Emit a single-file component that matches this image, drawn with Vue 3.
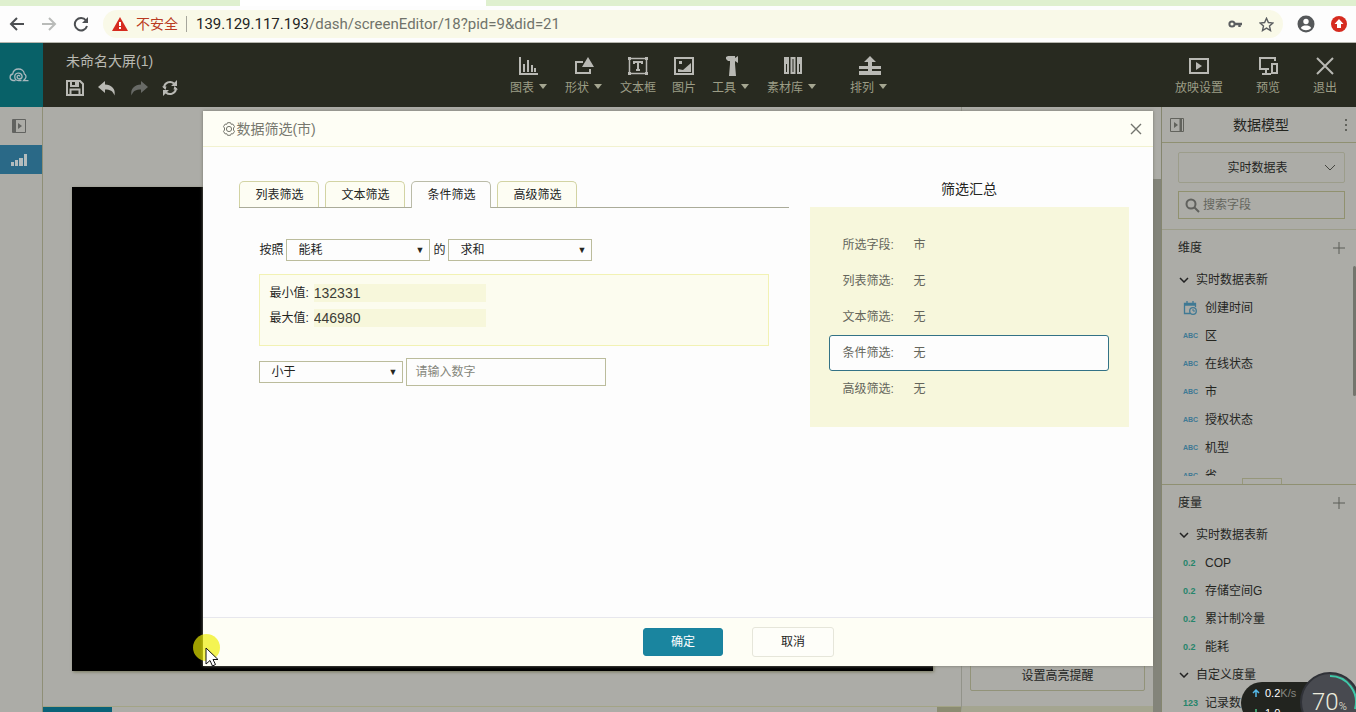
<script setup>
import { ref } from 'vue'

const tools = [
  { name: '图表', icon: 'chart', menu: true },
  { name: '形状', icon: 'shape', menu: true },
  { name: '文本框', icon: 'text', menu: false },
  { name: '图片', icon: 'image', menu: false },
  { name: '工具', icon: 'hammer', menu: true },
  { name: '素材库', icon: 'library', menu: true },
  { name: '排列', icon: 'align', menu: true },
]
const tabs = ['列表筛选', '文本筛选', '条件筛选', '高级筛选']
const activeTab = ref('条件筛选')
const field = ref('能耗')
const method = ref('求和')
const operator = ref('小于')
const amount = ref('')
const keyword = ref('')
const summary = [
  ['所选字段', '市'],
  ['列表筛选', '无'],
  ['文本筛选', '无'],
  ['条件筛选', '无'],
  ['高级筛选', '无'],
]
const dimensions = ['区', '在线状态', '市', '授权状态', '机型', '省']
const measures = ['COP', '存储空间G', '累计制冷量', '能耗']
</script>

<template>
  <div class="window">
    <div class="tabstrip"><span class="current-tab"></span></div>
    <div class="browser">
      <button class="nav" aria-label="后退"><svg width="16" height="16" viewBox="0 0 16 16"><path d="M15 8H2M8 2L2 8l6 6" fill="none" stroke="#4c4f52" stroke-width="2" /></svg></button>
      <button class="nav" aria-label="前进"><svg width="16" height="16" viewBox="0 0 16 16"><path d="M1 8h13M8 2l6 6-6 6" fill="none" stroke="#b9bbb9" stroke-width="2" /></svg></button>
      <button class="nav" aria-label="刷新"><svg width="16" height="16" viewBox="0 0 16 16"><path d="M13 4.5A6.2 6.2 0 1 0 14 10" fill="none" stroke="#4c4f52" stroke-width="2" /><path d="M15 1v6H9z" fill="#4c4f52" /></svg></button>
      <div class="address">
        <svg width="16" height="14" viewBox="0 0 16 14"><path d="M8 0l8 14H0z" fill="#d62b1f" /><path d="M7 5h2v4H7zM7 10h2v2H7z" fill="#fff" /></svg>
        <span class="unsafe">不安全</span>
        <span class="url"><b>139.129.117.193</b>/dash/screenEditor/18?pid=9&amp;did=21</span>
        <svg class="key" width="14" height="8" viewBox="0 0 14 8"><circle cx="4" cy="4" r="2.6" fill="none" stroke="#5b5e60" stroke-width="2" /><path d="M6 4h8M11.500 4v3" stroke="#5b5e60" stroke-width="2.400" /></svg>
        <svg width="15" height="15" viewBox="0 0 15 15"><path d="M7.500 1.300l1.900 4.200 4.500.5-3.400 3 1 4.500-4-2.400-4 2.400 1-4.500-3.400-3 4.500-.5z" fill="none" stroke="#5b5e60" stroke-width="1.400" /></svg>
      </div>
      <button class="nav" aria-label="用户"><svg width="18" height="18" viewBox="0 0 18 18"><circle cx="9" cy="9" r="8.500" fill="#55585a" /><circle cx="9" cy="6.500" r="2.700" fill="#fff" /><path d="M3.800 13c1-2 3-2.500 5.200-2.500s4.200.5 5.200 2.500c-3 3-7.400 3-10.400 0z" fill="#fff" /></svg></button>
      <button class="nav" aria-label="更新"><svg width="16" height="16" viewBox="0 0 16 16"><circle cx="8" cy="8" r="8" fill="#d62b1f" /><path d="M8 3l4.500 5H10v4H6V8H3.500z" fill="#fff" /></svg></button>
    </div>

    <div class="app">
      <header class="topbar">
        <a class="logo" href="#" aria-label="首页"><svg width="20" height="14" viewBox="0 0 20 14"><path d="M6.500 12.500H4a3.300 3.300 0 0 1-.3-6.500C4.200 3 6.500 1 9.500 1S15 3 15.300 5.800c2 1 2.200 3.500.7 5.200l-1.500 1.700H19.500" fill="none" stroke="#a9b8bd" stroke-width="1.300" /><path d="M12.500 12.500H9.500a3.700 3.700 0 1 1 3.600-4.300c.2 3-4.800 3.600-5 .7 0-1.700 2.500-2 2.700-.4" fill="none" stroke="#a9b8bd" stroke-width="1.300" /></svg></a>
        <div class="document">
          <span class="title">未命名大屏(1)</span>
          <div class="actions">
            <button aria-label="保存"><svg width="18" height="16" viewBox="0 0 18 16"><path d="M1 1h13l3 3v11H1z" fill="none" stroke="#b9b9b4" stroke-width="2" /><path d="M5 1v5h7V1M4.500 15V9.500h9V15" fill="none" stroke="#b9b9b4" stroke-width="2" /><path d="M9 2h2v3H9z" fill="#b9b9b4" /></svg></button>
            <button aria-label="撤销"><svg width="18" height="16" viewBox="0 0 18 16"><path d="M7 1v3.500c6 0 11 4 9.500 11C15 11 12 9.500 7 9.500V13L0 7z" fill="#b9b9b4" /></svg></button>
            <button aria-label="重做"><svg width="18" height="16" viewBox="0 0 18 16"><path d="M11 1v3.500c-6 0-11 4-9.500 11C3 11 6 9.500 11 9.500V13l7-6z" fill="#686a66" /></svg></button>
            <button aria-label="刷新"><svg width="16" height="16" viewBox="0 0 16 16"><path d="M2 7.500A6 6 0 0 1 12 3.500M14 8.500A6 6 0 0 1 4 12.500" fill="none" stroke="#b9b9b4" stroke-width="2" /><path d="M9 6h6V0zM7 10H1v6zM0 6.500h4.500L3.500 10zM16 9.500h-4.500L12.500 6z" fill="#b9b9b4" /></svg></button>
          </div>
        </div>
        <nav class="tools">
          <button v-for="t in tools" :key="t.name" class="tool" :class="t.icon">
            <svg width="22" height="20" viewBox="0 0 22 20">
              <path v-if="t.icon === 'chart'" d="M2 1v17h18M6 16V8M10 16V4M14 16V9M17 16v-4" fill="none" stroke="#b9b9b4" stroke-width="2" />
              <g v-else-if="t.icon === 'shape'"><path d="M10 6H3v11h14v-4" fill="none" stroke="#b9b9b4" stroke-width="2" /><path d="M15 1l6 10H9z" fill="#b9b9b4" /></g>
              <g v-else-if="t.icon === 'text'"><path d="M2.500 2.500h17v15h-17z" fill="none" stroke="#b9b9b4" stroke-width="1.500" /><path d="M7 8V6h8v2M11 6v8M9 14h4" fill="none" stroke="#b9b9b4" stroke-width="2" /><path d="M1 1h3v3H1zM18 1h3v3h-3zM1 16h3v3H1zM18 16h3v3h-3z" fill="#b9b9b4" /></g>
              <g v-else-if="t.icon === 'image'"><path d="M2 2h18v16H2z" fill="none" stroke="#b9b9b4" stroke-width="2" /><path d="M6 5h3v3H6zM5 16v-3l5 1 8-7v9z" fill="#b9b9b4" /></g>
              <path v-else-if="t.icon === 'hammer'" d="M5 1l2-1h7v2l3-2v7l-3-2v3l1 12H8l1-12V5H7L5 3z" fill="#b9b9b4" />
              <g v-else-if="t.icon === 'library'"><path d="M3 2h3v15H3zM9.500 2h3v15h-3zM16 2h3v15h-3z" fill="none" stroke="#b9b9b4" stroke-width="2" /><path d="M2 1h5v7H2zM15 1h5v7h-5z" fill="#b9b9b4" /></g>
              <path v-else d="M11 0l6 6h-4v4h9v3h-9v2h9v4H0v-4h9v-2H0v-3h9V6H5z" fill="#b9b9b4" />
            </svg>
            <span>{{ t.name }}<i v-if="t.menu" class="caret"></i></span>
          </button>
        </nav>
        <div class="commands">
          <button><svg width="20" height="20" viewBox="0 0 20 20"><path d="M1 3h18v14H1z" fill="none" stroke="#b9b9b4" stroke-width="2" /><path d="M7 6l6 4-6 4z" fill="#b9b9b4" /></svg><span>放映设置</span></button>
          <button><svg width="20" height="20" viewBox="0 0 20 20"><path d="M17 5V2H2v11h9M8 13v5M4 18h9M14 8h5v9h-5z" fill="none" stroke="#b9b9b4" stroke-width="2" /></svg><span>预览</span></button>
          <button><svg width="20" height="20" viewBox="0 0 20 20"><path d="M2 2l16 16M18 2L2 18" stroke="#b9b9b4" stroke-width="2" /></svg><span>退出</span></button>
        </div>
      </header>

      <div class="workspace">
        <aside class="rail">
          <button aria-label="展开"><svg width="14" height="14" viewBox="0 0 14 14"><path d="M.5.5h13v13H.5z" fill="none" stroke="#626360" /><path d="M1 1h3v12H1zM6 4l4 3-4 3z" fill="#626360" /></svg></button>
          <button class="selected" aria-label="图层"><svg width="17" height="12" viewBox="0 0 17 12"><path d="M0 8h3v4H0zM4 6h3v6H4zM8 4h4v8H8zM13 0h3v12h-3z" fill="#b3bcbd" /></svg></button>
        </aside>
        <main class="stage">
          <div class="canvas"></div>
          <div class="pages"><span class="page"></span><span class="page-end"></span></div>
        </main>
        <aside class="properties">
          <button>设置高亮提醒</button>
        </aside>
        <div class="track"><div class="thumb"></div></div>
        <aside class="model">
          <div class="model-head">
            <svg width="14" height="14" viewBox="0 0 14 14"><path d="M.5.5h13v13H.5z" fill="none" stroke="#62635d" /><path d="M9.500 1H12v12H9.500zM4 4l4 3-4 3z" fill="#62635d" /></svg>
            <h2>数据模型</h2>
            <svg width="4" height="12" viewBox="0 0 4 12"><path d="M1 0h2v2H1zM1 5h2v2H1zM1 10h2v2H1z" fill="#62635d" /></svg>
          </div>
          <div class="source">
            <button class="dataset"><span>实时数据表</span><svg width="12" height="8" viewBox="0 0 12 8"><path d="M1 1l5 5 5-5" fill="none" stroke="#44453f" /></svg></button>
            <label class="search"><svg width="15" height="15" viewBox="0 0 15 15"><circle cx="6" cy="6" r="4.500" fill="none" stroke="#60615d" stroke-width="2" /><path d="M9 9l5 5" stroke="#60615d" stroke-width="2" /></svg><input v-model="keyword" aria-label="搜索字段" placeholder="搜索字段" /></label>
          </div>
          <section class="dimension">
            <h3>维度<button aria-label="添加维度"><svg width="12" height="12" viewBox="0 0 12 12"><path d="M6 0v12M0 6h12" stroke="#5b5c57" /></svg></button></h3>
            <ul>
              <li class="group"><svg width="10" height="6" viewBox="0 0 10 6"><path d="M1 1l4 4 4-4" fill="none" stroke="#222" stroke-width="1.500" /></svg>实时数据表新</li>
              <li><span class="kind"><svg width="14" height="14" viewBox="0 0 14 14"><path d="M7 12.500H1.500V2.500h11V6M1 4h12M4 0v4M10 0v4" fill="none" stroke="#3f7994" stroke-width="1.300" /><circle cx="10" cy="10" r="3.300" fill="none" stroke="#3f7994" stroke-width="1.300" /><path d="M10 8v2h2" fill="none" stroke="#3f7994" /></svg></span>创建时间</li>
              <li v-for="d in dimensions" :key="d"><span class="kind">ABC</span>{{ d }}</li>
            </ul>
            <span class="grip"></span>
            <span class="list-thumb"></span>
          </section>
          <section class="measure">
            <h3>度量<button aria-label="添加度量"><svg width="12" height="12" viewBox="0 0 12 12"><path d="M6 0v12M0 6h12" stroke="#5b5c57" /></svg></button></h3>
            <ul>
              <li class="group"><svg width="10" height="6" viewBox="0 0 10 6"><path d="M1 1l4 4 4-4" fill="none" stroke="#222" stroke-width="1.500" /></svg>实时数据表新</li>
              <li v-for="m in measures" :key="m"><span class="kind number">0.2</span>{{ m }}</li>
              <li class="group"><svg width="10" height="6" viewBox="0 0 10 6"><path d="M1 1l4 4 4-4" fill="none" stroke="#222" stroke-width="1.500" /></svg>自定义度量</li>
              <li><span class="kind number">123</span>记录数</li>
            </ul>
          </section>
        </aside>
      </div>

      <div class="dialog" role="dialog" aria-labelledby="dialog-title">
        <div class="dialog-head">
          <svg width="14" height="14" viewBox="0 0 14 14"><circle cx="7" cy="7" r="2.600" fill="none" stroke="#74756c" /><path d="M5.500.7h3l.7 1.600 1.700-.2 1.600 2.500-1 1.400v2l1 1.400-1.600 2.500-1.700-.2-.7 1.600h-3l-.7-1.600-1.700.2L1.500 9.400l1-1.400V6l-1-1.400 1.600-2.500 1.700.2z" fill="none" stroke="#74756c" /></svg>
          <h1 id="dialog-title">数据筛选(市)</h1>
          <button aria-label="关闭"><svg width="12" height="12" viewBox="0 0 12 12"><path d="M1 1l10 10M11 1L1 11" stroke="#73746e" stroke-width="1.400" /></svg></button>
        </div>
        <div class="dialog-body">
          <div class="filters">
            <div class="tabs" role="tablist">
              <button v-for="t in tabs" :key="t" role="tab" :aria-selected="t === activeTab" :class="{ active: t === activeTab }" @click="activeTab = t">{{ t }}</button>
            </div>
            <div class="conditions">
              <div class="row">
                <label for="field">按照</label>
                <span class="select"><select id="field" v-model="field"><option>能耗</option></select></span>
                <label for="method">的</label>
                <span class="select"><select id="method" v-model="method"><option>求和</option></select></span>
              </div>
              <div class="range">
                <label>最小值:<input value="132331" readonly /></label>
                <label>最大值:<input value="446980" readonly /></label>
              </div>
              <div class="row">
                <span class="select"><select v-model="operator" aria-label="比较方式"><option>小于</option></select></span>
                <input v-model="amount" class="amount" aria-label="数值" placeholder="请输入数字" />
              </div>
            </div>
          </div>
          <div class="summary">
            <h2>筛选汇总</h2>
            <dl>
              <div v-for="s in summary" :key="s[0]" :class="{ active: s[0] === activeTab }"><dt>{{ s[0] }}:</dt><dd>{{ s[1] }}</dd></div>
            </dl>
          </div>
        </div>
        <div class="dialog-foot">
          <button class="primary">确定</button>
          <button>取消</button>
        </div>
      </div>
    </div>

    <div class="speed">
      <div class="rates">
        <span><svg width="8" height="8" viewBox="0 0 8 8"><path d="M4 8V1M1 4l3-3 3 3" fill="none" stroke="#54b8e8" stroke-width="1.500" /></svg><b>0.2</b>K/s</span>
        <span><svg width="8" height="8" viewBox="0 0 8 8"><path d="M4 0v7M1 4l3 3 3-3" fill="none" stroke="#4dc58a" stroke-width="1.500" /></svg><b>1.0</b></span>
      </div>
      <div class="gauge">
        <svg width="60" height="60" viewBox="0 0 60 60"><circle cx="30" cy="30" r="29" fill="#484a50" stroke="#303238" stroke-width="2" /><path d="M30 4a26 26 0 0 1 25 33" fill="none" stroke="#3fc8a8" stroke-width="2" /></svg>
        <span>70<small>%</small></span>
      </div>
    </div>
    <div class="pointer"><svg width="14" height="20" viewBox="0 0 14 20"><path d="M1 1v16l4-3.500 2.500 5.500 3-1.500L8 12.500h5z" fill="#fff" stroke="#111" /></svg></div>
  </div>
</template>

<style>
body { margin: 0; }
</style>

<style scoped>
* { box-sizing: border-box; }
.window { position: relative; height: 100vh; overflow: hidden; display: flex; flex-direction: column; font: 12px/20px "Liberation Sans", "Noto Sans CJK SC", sans-serif; color: #24251f; background: #acaca7; }
button { font: inherit; color: inherit; border: 0; padding: 0; background: none; }
svg { display: block; flex: none; }
h1, h2, h3, ul, dl, dd { margin: 0; padding: 0; font-weight: 400; list-style: none; }

.tabstrip { height: 6px; flex: none; background: #dff0cf; }
.current-tab { display: block; height: 6px; width: 246px; margin-left: 240px; background: #fff; }
.browser { flex: none; height: 37px; display: flex; align-items: center; gap: 16px; padding: 0 9px; background: #fdfdfd; border-bottom: 1px solid #b6b6ae; }
.address { flex: 1; height: 28px; margin-left: -2px; margin-right: -2px; padding: 0 9px; display: flex; align-items: center; border-radius: 14px; background: #f9f9e8; font-size: 14px; }
.unsafe { margin-left: 8px; padding-right: 8px; line-height: 16px; border-right: 1px solid #a6a69c; color: #b93a22; }
.url { flex: 1; margin-left: 9px; font-family: Roboto, "Noto Sans", sans-serif; font-size: 15px; color: #70736b; }
.url b { font-weight: 400; color: #23241f; }
.key { margin-right: 17px; }

.app { position: relative; flex: 1; min-height: 0; display: flex; flex-direction: column; }
.topbar { flex: none; height: 64px; display: flex; background: #282a20; color: #9c9d86; }
.logo { width: 43px; padding-right: 6px; display: flex; align-items: center; justify-content: center; background: #086168; }
.document { flex: 1; padding: 8px 0 0 23px; }
.title { font-size: 14px; color: #b9b9b2; }
.actions { display: flex; gap: 14px; margin-top: 8px; }
.tools { display: flex; padding: 13px 0 0 12px; }
.tool { display: flex; flex-direction: column; align-items: center; gap: 2px; margin-right: 16px; }
.caret { display: inline-block; margin-left: 5px; margin-right: 2px; vertical-align: 3px; border: 4px solid transparent; border-top: 5px solid #a5a691; border-bottom: 0; }
.library { margin-right: 32px; }
.commands { flex: 1; display: flex; justify-content: flex-end; gap: 33px; padding: 13px 19px 0 0; }
.commands button { display: flex; flex-direction: column; align-items: center; gap: 2px; align-self: flex-start; }

.workspace { flex: 1; min-height: 0; display: flex; }
.rail { flex: none; width: 43px; border-right: 1px solid #8f8f77; }
.rail button { width: 100%; height: 38px; padding-right: 4px; display: flex; align-items: center; justify-content: center; }
.rail .selected { height: 29px; background: #2a6987; }
.stage { flex: 1; min-width: 0; display: flex; flex-direction: column; }
.canvas { flex: 1; margin: 80px 28px 35px 29px; background: #000; box-shadow: 1px 1px 3px #77785e; }
.pages { height: 6px; display: flex; justify-content: space-between; border-top: 1px solid #a3a485; }
.page { width: 69px; background: #0a6278; }
.page-end { width: 24px; background: #8b8c72; }
.properties { flex: none; width: 192px; display: flex; flex-direction: column; justify-content: flex-end; padding: 0 8px 15px; border-left: 1px solid #92938a; border-bottom: 6px solid #a4a590; }
.properties button { height: 30px; border: 1px solid #929379; border-radius: 2px; }
.track { flex: none; width: 8px; padding-top: 72px; display: flex; }
.thumb { flex: 1; background: #83847a; }
.model { flex: none; width: 195px; border-left: 1px solid #85866f; display: flex; flex-direction: column; }
.model-head { flex: none; height: 36px; display: flex; align-items: center; gap: 8px; padding: 0 8px; border-bottom: 1px solid #8f9072; }
.model-head h2 { flex: 1; padding-right: 6px; text-align: center; font-size: 14px; }
.source { flex: none; padding: 9px 11px 10px 16px; border-bottom: 1px solid #9c9d8a; }
.dataset { position: relative; width: 100%; height: 31px; display: flex; align-items: center; justify-content: center; border: 1px solid #9c9d8b; border-radius: 2px; padding-right: 8px; }
.dataset svg { position: absolute; right: 8px; }
.search { display: flex; align-items: center; height: 28px; margin-top: 8px; padding-left: 6px; border: 1px solid #90916f; gap: 3px; }
.search input { min-width: 0; flex: 1; border: 0; padding: 0; outline: 0; background: none; font: inherit; }
.search input::placeholder { color: #65665e; opacity: 1; }
section { position: relative; flex: none; }
.dimension { height: 255px; border-bottom: 1px solid #8f9072; }
.dimension ul { height: 210px; overflow: hidden; }
h3 { height: 36px; display: flex; align-items: center; justify-content: space-between; padding: 0 11px 0 16px; font-size: 12px; }
.measure { flex: 1; min-height: 0; overflow: hidden; }
li { height: 28px; display: flex; align-items: center; padding-left: 21px; }
.group { padding-left: 17px; gap: 7px; }
.kind { width: 22px; font-size: 7px; font-weight: 700; color: #3f7994; }
.number { font-size: 9px; color: #27856b; }
.grip { position: absolute; left: 80px; bottom: 0; width: 40px; height: 6px; border: 1px solid #96977b; border-bottom: 0; }
.list-thumb { position: absolute; right: 0; top: 36px; width: 3px; height: 130px; border-radius: 3px; background: #74756d; }

.dialog { position: absolute; top: 68px; left: 15%; right: 15%; display: flex; flex-direction: column; background: #fdfdfd; box-shadow: 0 0 3px #77786c; }
.dialog-head { height: 36px; display: flex; align-items: center; padding: 0 11px 0 19px; background: #fefef5; border-bottom: 1px solid #f2f2d0; }
.dialog-head h1 { flex: 1; font-size: 14px; color: #77786e; }
.dialog-body { min-height: 470px; display: flex; gap: 21px; padding: 34px 24px 0 36px; }
.filters { flex: 1; }
.tabs { display: flex; gap: 6px; border-bottom: 1px solid #aaab99; }
.tabs button { width: 80px; height: 26px; border: 1px solid #d2d3a3; border-bottom: 0; border-radius: 5px 5px 0 0; background: #fdfdf3; }
.tabs .active { background: #fdfdfd; border-color: #babba8; margin-bottom: -1px; height: 27px; }
.conditions { padding: 31px 20px 0; }
.row { display: flex; align-items: center; gap: 3px; }
.select { position: relative; width: 144px; }
.select::after { content: "▼"; position: absolute; right: 6px; top: 1px; font-size: 9px; pointer-events: none; }
select { display: block; appearance: none; width: 100%; height: 22px; padding: 0 11px; border: 1px solid #bbbc9c; border-radius: 0; background: #fdfdfd; font: inherit; color: inherit; }
.range { height: 72px; margin: 13px 0 12px; padding: 8px 9px; border: 1px solid #f2f2b4; background: #fcfcef; }
.range label { display: flex; align-items: center; height: 20px; gap: 5px; margin-bottom: 5px; }
.range input { width: 172px; height: 18px; border: 0; padding: 0; background: #f7f7db; font-family: inherit; font-size: 14px; color: #3c3d37; }
.amount { width: 200px; height: 28px; border: 1px solid #bbbc9c; padding: 0 8px; background: #fdfdfd; font: inherit; }
.amount::placeholder { color: #85867b; opacity: 1; }
.summary { width: 319px; }
.summary h2 { font-size: 14px; line-height: 16px; text-align: center; }
.summary dl { margin-top: 10px; height: 220px; padding: 20px 20px 0 19px; background: #f7f7dc; color: #64655b; }
.summary dl div { display: flex; align-items: center; height: 36px; padding: 0 13px; border: 1px solid transparent; border-radius: 3px; }
.summary dl .active { border-color: #337286; background: #fdfdfd; }
.summary dt { width: 71px; }
.dialog-foot { height: 49px; display: flex; align-items: center; justify-content: center; gap: 29px; padding-left: 121px; background: #fefef5; border-top: 1px solid #e7e7ed; }
.dialog-foot button { width: 82px; height: 30px; border: 1px solid #e6e6da; border-radius: 3px; background: #fefef9; }
.dialog-foot .primary { width: 80px; height: 28px; border-color: #1a829f; background: #1a859f; color: #fff; }

.speed { position: absolute; right: -4px; bottom: -20px; width: 119px; height: 60px; }
.rates { width: 90px; height: 42px; margin-top: 10px; border-radius: 21px; padding: 1px 0 0 11px; background: #22241f; color: #85867f; }
.rates span { display: flex; align-items: center; font-size: 11px; line-height: 20px; }
.rates b { margin-left: 5px; font-weight: 400; color: #fff; }
.gauge { position: absolute; right: 0; top: 0; color: #ededdf; }
.gauge span { position: absolute; left: 12px; top: 18px; font: 300 24px/24px Roboto, "Open Sans", sans-serif; }
.gauge small { font-size: 11px; }
.pointer { position: absolute; left: 193px; bottom: 51px; width: 27px; height: 27px; padding: 13px 0 0 12px; border-radius: 50%; background: #eeee00aa; }
</style>
